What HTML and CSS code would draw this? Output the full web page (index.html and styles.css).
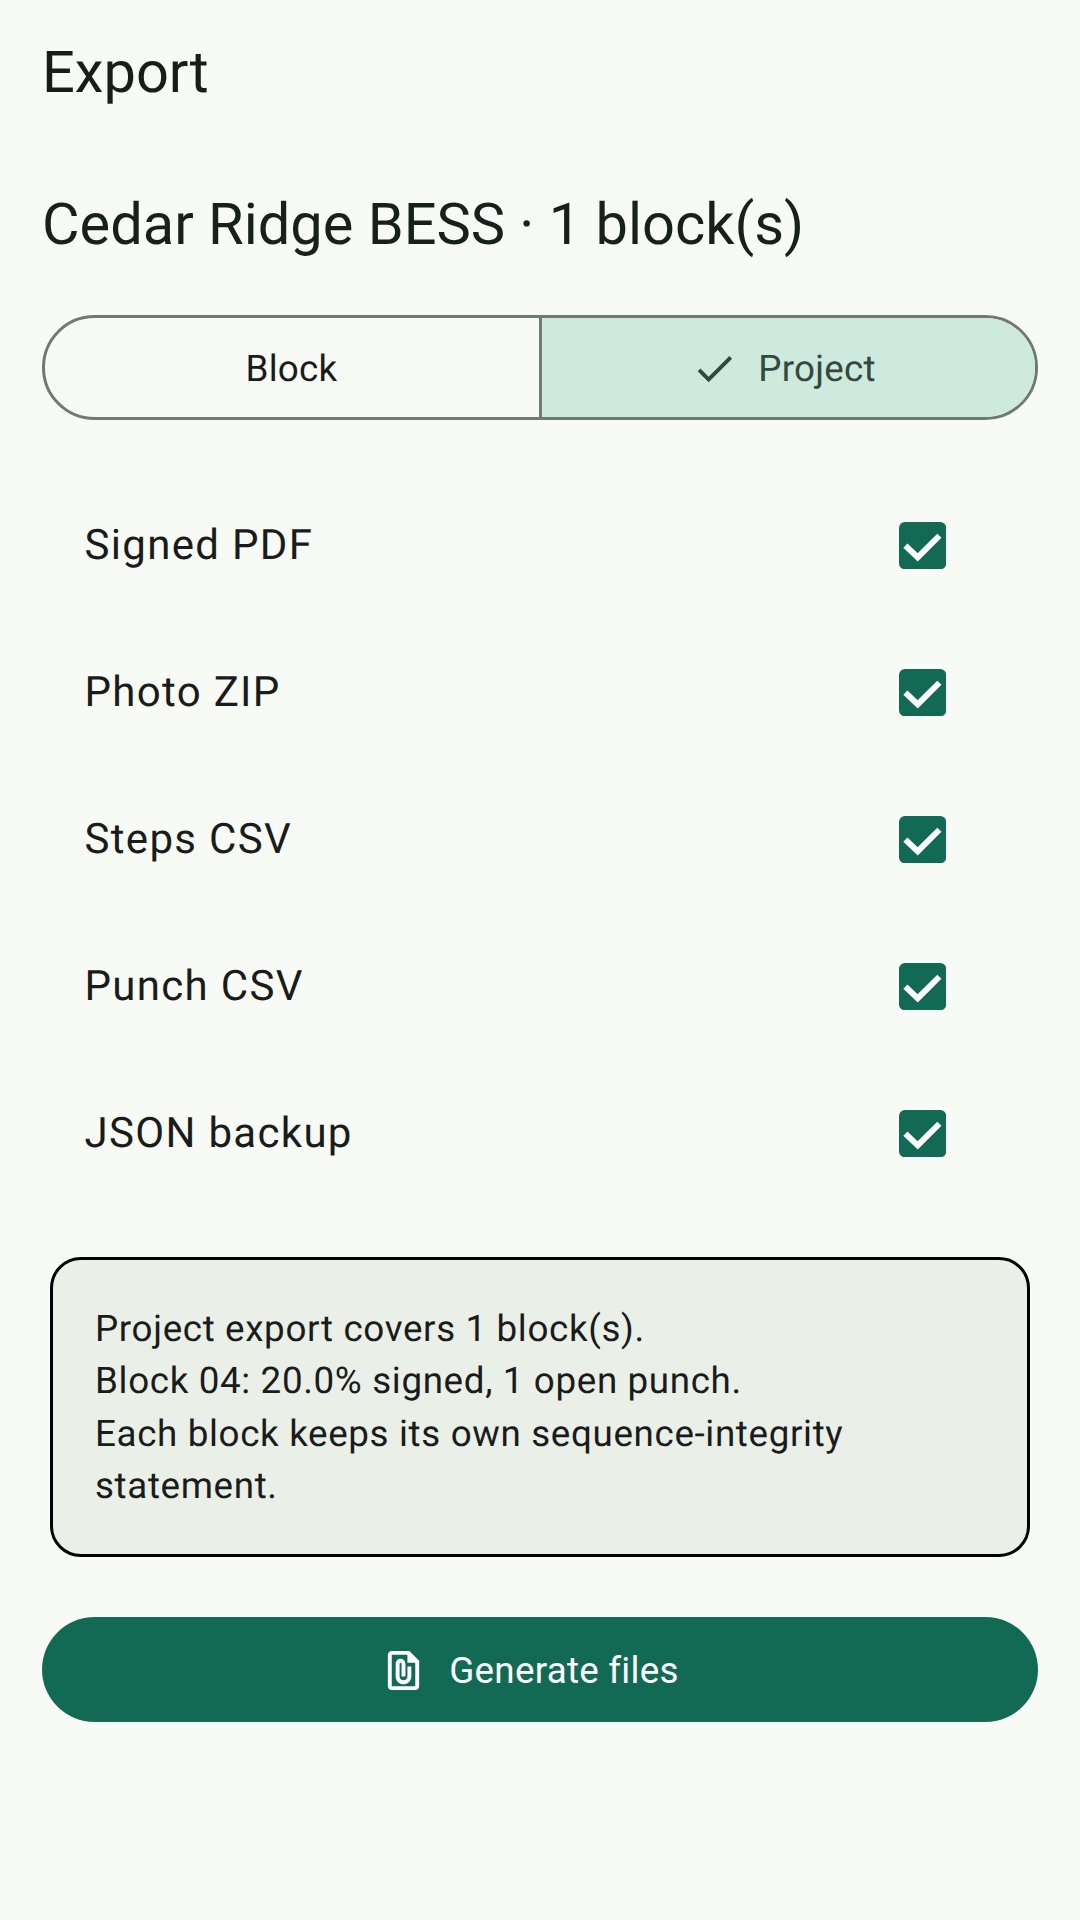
FILE: index.html
```html
<!DOCTYPE html>
<html lang="en">
<head>
<meta charset="utf-8">
<title>Export</title>
<link rel="stylesheet" href="styles.css">
</head>
<body>
<main class="screen">
  <h1 class="title">Export</h1>
  <h2 class="subtitle">Cedar Ridge BESS · 1 block(s)</h2>
  <div class="segments">
    <div class="segment">Block</div>
    <div class="segment segment-on">
      <svg class="segment-check" viewBox="0 0 24 24"><path d="M9 16.170L4.830 12l-1.420 1.410L9 19 21 7l-1.410-1.410z"/></svg>
      <span>Project</span>
    </div>
  </div>
  <ul class="options">
    <li class="option"><span>Signed PDF</span><svg class="box" viewBox="0 0 48 48"><rect width="48" height="48" rx="6"/><path d="M6.500 24 19 36 41 14"/></svg></li>
    <li class="option"><span>Photo ZIP</span><svg class="box" viewBox="0 0 48 48"><rect width="48" height="48" rx="6"/><path d="M6.500 24 19 36 41 14"/></svg></li>
    <li class="option"><span>Steps CSV</span><svg class="box" viewBox="0 0 48 48"><rect width="48" height="48" rx="6"/><path d="M6.500 24 19 36 41 14"/></svg></li>
    <li class="option"><span>Punch CSV</span><svg class="box" viewBox="0 0 48 48"><rect width="48" height="48" rx="6"/><path d="M6.500 24 19 36 41 14"/></svg></li>
    <li class="option"><span>JSON backup</span><svg class="box" viewBox="0 0 48 48"><rect width="48" height="48" rx="6"/><path d="M6.500 24 19 36 41 14"/></svg></li>
  </ul>
  <div class="summary">Project export covers 1 block(s).<br>Block 04: 20.0% signed, 1 open punch.<br>Each block keeps its own sequence-integrity statement.</div>
  <button class="generate" type="button">
    <svg class="generate-icon" viewBox="0 0 24 24"><path d="M15 2H6c-1.100 0-2 .9-2 2v16c0 1.100.9 2 2 2h12c1.100 0 2-.9 2-2V7l-5-5zM6 20V4h8v4h4v12H6zm10-10v5c0 2.210-1.790 4-4 4s-4-1.790-4-4V8.500c0-1.470 1.260-2.640 2.760-2.490 1.300.13 2.240 1.320 2.240 2.630V15h-2V8.500c0-.28-.22-.5-.5-.5s-.5.22-.5.5V15c0 1.100.9 2 2 2s2-.9 2-2v-5h2z"/></svg>
    <span>Generate files</span>
  </button>
</main>
</body>
</html>
```
FILE: styles.css
```css
* { box-sizing: border-box; }
html, body { margin: 0; height: 100%; }
body {
  background: #f8faf5;
  color: #191c1a;
  font-family: Roboto, "Liberation Sans", sans-serif;
  text-rendering: geometricPrecision;
}
.screen {
  width: 1080px;
  height: 1920px;
  padding: 37px 42px 0;
  display: flex;
  flex-direction: column;
}
.title {
  margin: 0;
  font-size: 57.75px;
  line-height: 73.5px;
  font-weight: 400;
}
.subtitle {
  margin: 78px 0 0;
  font-size: 57.75px;
  line-height: 73.5px;
  font-weight: 400;
  color: #17201c;
}
.segments {
  margin-top: 53px;
  height: 105px;
  display: grid;
  grid-template-columns: 494px 1fr;
  border: 3px solid #707973;
  border-radius: 53px;
  overflow: hidden;
}
.segment {
  display: flex;
  align-items: center;
  justify-content: center;
  gap: 20px;
  padding: 1px 1px 0 0;
  font-size: 36.75px;
  letter-spacing: .26px;
  font-weight: 400;
}
.segment-on {
  background: #cee9dd;
  border-left: 3px solid #707973;
  color: #34483f;
  padding: 1px 10px 0 0;
}
.segment-check { width: 47px; height: 47px; fill: #34483f; }
.options {
  list-style: none;
  margin: 51px 0 0;
  padding: 0;
}
.option {
  height: 147px;
  padding: 2px 92px 0 42.5px;
  display: flex;
  align-items: center;
  justify-content: space-between;
  font-size: 42px;
  letter-spacing: 1.31px;
}
.box { width: 47.25px; height: 47.25px; display: block; margin-top: .5px; }
.box rect { fill: #126a55; }
.box path { fill: none; stroke: #fff; stroke-width: 6px; }
.summary {
  margin: 51px 8px 0;
  padding: 42.5px 42px 42px 42px;
  height: 300px;
  background: #eaefe8;
  border: 3px solid #000;
  border-radius: 31px;
  font-size: 36.75px;
  line-height: 52.5px;
  letter-spacing: .65px;
  color: #191c1a;
}
.generate {
  margin-top: 60px;
  height: 105px;
  padding: 1px 21px 0 0;
  border: 0;
  border-radius: 53px;
  background: #126a55;
  color: #fff;
  font: 400 36.75px Roboto, "Liberation Sans", sans-serif;
  letter-spacing: .26px;
  display: flex;
  align-items: center;
  justify-content: center;
  gap: 22px;
}
.generate-icon { width: 47px; height: 47px; fill: #fff; }
```
